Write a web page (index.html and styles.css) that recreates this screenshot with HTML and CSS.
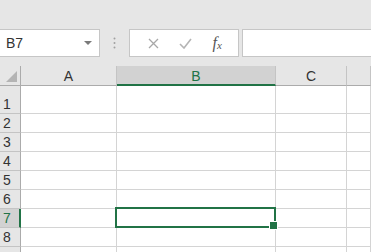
FILE: index.html
```html
<!DOCTYPE html>
<html lang="en">
<head>
  <meta charset="UTF-8" />
  <meta name="viewport" content="width=device-width, initial-scale=1.0" />
  <title>Sheet</title>
  <link rel="stylesheet" href="styles.css">
</head>
<body>
  <div class="formula-bar">
    <div class="name-box">
      <span>B7</span>
      <svg class="dropdown" width="8" height="4" viewBox="0 0 8 4"><path d="M0 0h8L4 4z" fill="#7a7a7a"/></svg>
    </div>
    <div class="grip">
      <svg width="3" height="12" viewBox="0 0 3 12"><circle cx="1.5" cy="1.5" r="1" fill="#a0a0a0"/><circle cx="1.5" cy="6" r="1" fill="#a0a0a0"/><circle cx="1.5" cy="10.5" r="1" fill="#a0a0a0"/></svg>
    </div>
    <div class="fx-buttons">
      <svg width="11" height="11" viewBox="0 0 11 11"><path d="M1 1l9 9M10 1l-9 9" stroke="#a8a8a8" stroke-width="1.3" fill="none"/></svg>
      <svg width="13" height="11" viewBox="0 0 13 11"><path d="M1 6l4 4 7-9" stroke="#b4b4b4" stroke-width="1.6" fill="none"/></svg>
      <span class="fx">f<sub>x</sub></span>
    </div>
    <div class="formula-input"></div>
  </div>

  <div class="sheet">
    <div class="corner"><span class="corner-tri"></span></div>
    <div class="col-head">A</div>
    <div class="col-head active">B</div>
    <div class="col-head">C</div>
    <div class="col-head"></div>

    <div class="row-head tall">1</div><div class="cell tall"></div><div class="cell tall"></div><div class="cell tall"></div><div class="cell tall"></div>
    <div class="row-head">2</div><div class="cell"></div><div class="cell"></div><div class="cell"></div><div class="cell"></div>
    <div class="row-head">3</div><div class="cell"></div><div class="cell"></div><div class="cell"></div><div class="cell"></div>
    <div class="row-head">4</div><div class="cell"></div><div class="cell"></div><div class="cell"></div><div class="cell"></div>
    <div class="row-head">5</div><div class="cell"></div><div class="cell"></div><div class="cell"></div><div class="cell"></div>
    <div class="row-head">6</div><div class="cell"></div><div class="cell"></div><div class="cell"></div><div class="cell"></div>
    <div class="row-head active">7</div><div class="cell"></div><div class="cell selected"></div><div class="cell"></div><div class="cell"></div>
    <div class="row-head">8</div><div class="cell"></div><div class="cell"></div><div class="cell"></div><div class="cell"></div>
    <div class="row-head"></div><div class="cell"></div><div class="cell"></div><div class="cell"></div><div class="cell"></div>
  </div>
</body>
</html>
```

FILE: styles.css
```css
* {
  box-sizing: border-box;
}
body {
  margin: 0;
  font-family: "Liberation Sans", Arial, sans-serif;
  background: #fff;
  overflow: hidden;
}
.formula-bar {
  display: flex;
  align-items: flex-start;
  height: 66px;
  padding-top: 29px;
  background: #e6e6e6;
}
.name-box {
  display: flex;
  align-items: center;
  justify-content: space-between;
  margin-left: -1px;
  width: 101px;
  height: 28px;
  padding: 0 7px 0 6px;
  background: #fff;
  border: 1px solid #c6c6c6;
  color: #333;
  font-size: 14px;
}
.grip {
  display: flex;
  justify-content: center;
  width: 29px;
  padding-top: 8px;
}
.fx-buttons {
  display: flex;
  align-items: center;
  justify-content: space-around;
  width: 110px;
  height: 28px;
  padding: 0 6px 0 8px;
  background: #fff;
  border: 1px solid #c6c6c6;
}
.fx {
  font-family: "Liberation Serif", serif;
  font-style: italic;
  font-size: 16px;
  color: #555;
}
.fx sub {
  font-size: 11px;
  vertical-align: -1px;
}
.formula-input {
  flex: 1;
  margin-left: 3px;
  margin-right: -2px;
  height: 28px;
  background: #fff;
  border: 1px solid #c6c6c6;
}
.sheet {
  display: grid;
  grid-template-columns: 21px 96px 159px 71px 1fr;
  grid-auto-rows: 19px;
  grid-template-rows: 20px 28px;
}
.corner,
.col-head,
.row-head,
.cell {
  border-right: 1px solid #d4d4d4;
  border-bottom: 1px solid #d4d4d4;
}
.corner {
  position: relative;
  background: #e6e6e6;
  border-color: #ababab;
}
.corner-tri {
  position: absolute;
  right: 3px;
  bottom: 3px;
  width: 0;
  height: 0;
  border-left: 11px solid transparent;
  border-bottom: 11px solid #b4b4b4;
}
.col-head {
  display: flex;
  justify-content: center;
  align-items: center;
  background: #e6e6e6;
  border-bottom-color: #ababab;
  border-right-color: #c4c4c4;
  color: #333;
  font-size: 14px;
  padding-top: 1px;
}
.col-head.active {
  background: #d2d2d2;
  color: #217346;
  border-bottom: 2px solid #217346;
  padding-top: 2px;
}
.row-head {
  display: flex;
  align-items: flex-end;
  padding: 0 0 1px 3px;
  background: #e6e6e6;
  border-right-color: #ababab;
  border-bottom-color: #c4c4c4;
  color: #333;
  font-size: 14px;
  line-height: 16px;
}
.row-head.active {
  background: #d2d2d2;
  color: #217346;
  border-right: 2px solid #217346;
}
.cell.selected {
  position: relative;
}
.cell.selected::after {
  content: "";
  position: absolute;
  top: -2px;
  left: -2px;
  right: -1px;
  bottom: -1px;
  border: 2px solid #217346;
}
.cell.selected::before {
  content: "";
  position: absolute;
  right: -3px;
  bottom: -3px;
  width: 7px;
  height: 7px;
  background: #217346;
  border: 1px solid #fff;
  z-index: 1;
}
```
